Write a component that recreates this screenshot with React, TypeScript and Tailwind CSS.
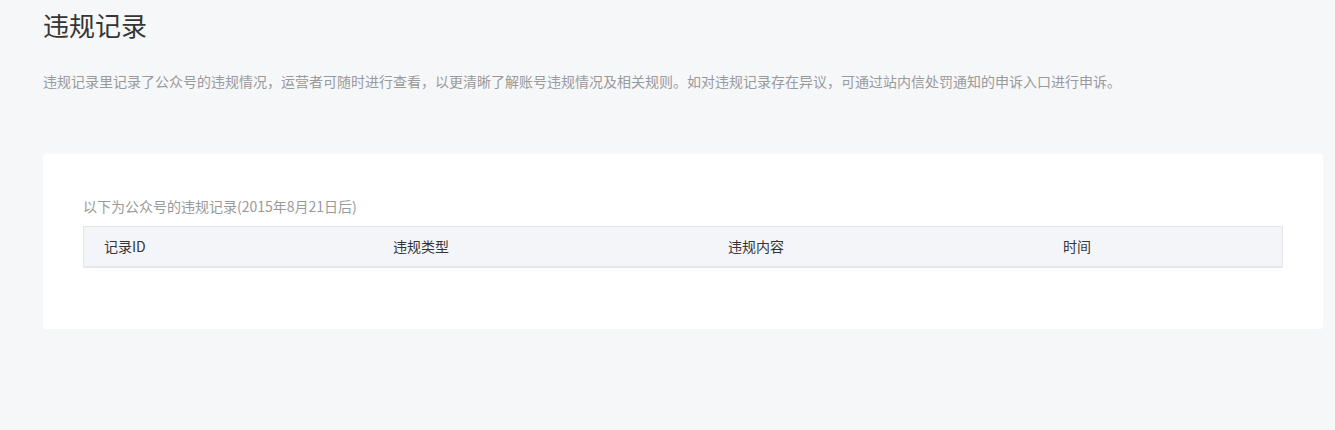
const columns = ["记录ID", "违规类型", "违规内容", "时间"];

export default function App() {
  return (
    <div
      className="min-h-[430px] w-full bg-[#f6f7f9] pl-[43px] pt-[7px] text-[#353535]"
      style={{ fontFamily: '"Noto Sans CJK SC", "Liberation Sans", sans-serif' }}
    >
      {/* Header */}
      <h2 className="text-[26px] leading-[36px] font-normal text-[#353535]">违规记录</h2>
      <p className="mt-[27px] text-[14px] leading-[22px] text-[#9a9a9a]">
        违规记录里记录了公众号的违规情况，运营者可随时进行查看，以更清晰了解账号违规情况及相关规则。如对违规记录存在异议，可通过站内信处罚通知的申诉入口进行申诉。
      </p>

      {/* Card */}
      <div className="mt-[62px] w-[1280px] rounded-[3px] bg-white px-10 pt-[42px] pb-[61px]">
        <div className="text-[14px] leading-[20px] text-[#9a9a9a]">
          以下为公众号的违规记录(2015年8月21日后)
        </div>
        <div className="mt-[10px] grid h-[42px] w-[1200px] grid-cols-[289px_335px_335px_1fr] items-center border border-b-2 border-[#e4e6eb] bg-[#f4f5f9] text-[14px] text-[#353535]">
          {columns.map((c) => (
            <div key={c} className="pl-5">
              {c}
            </div>
          ))}
        </div>
      </div>
    </div>
  );
}
